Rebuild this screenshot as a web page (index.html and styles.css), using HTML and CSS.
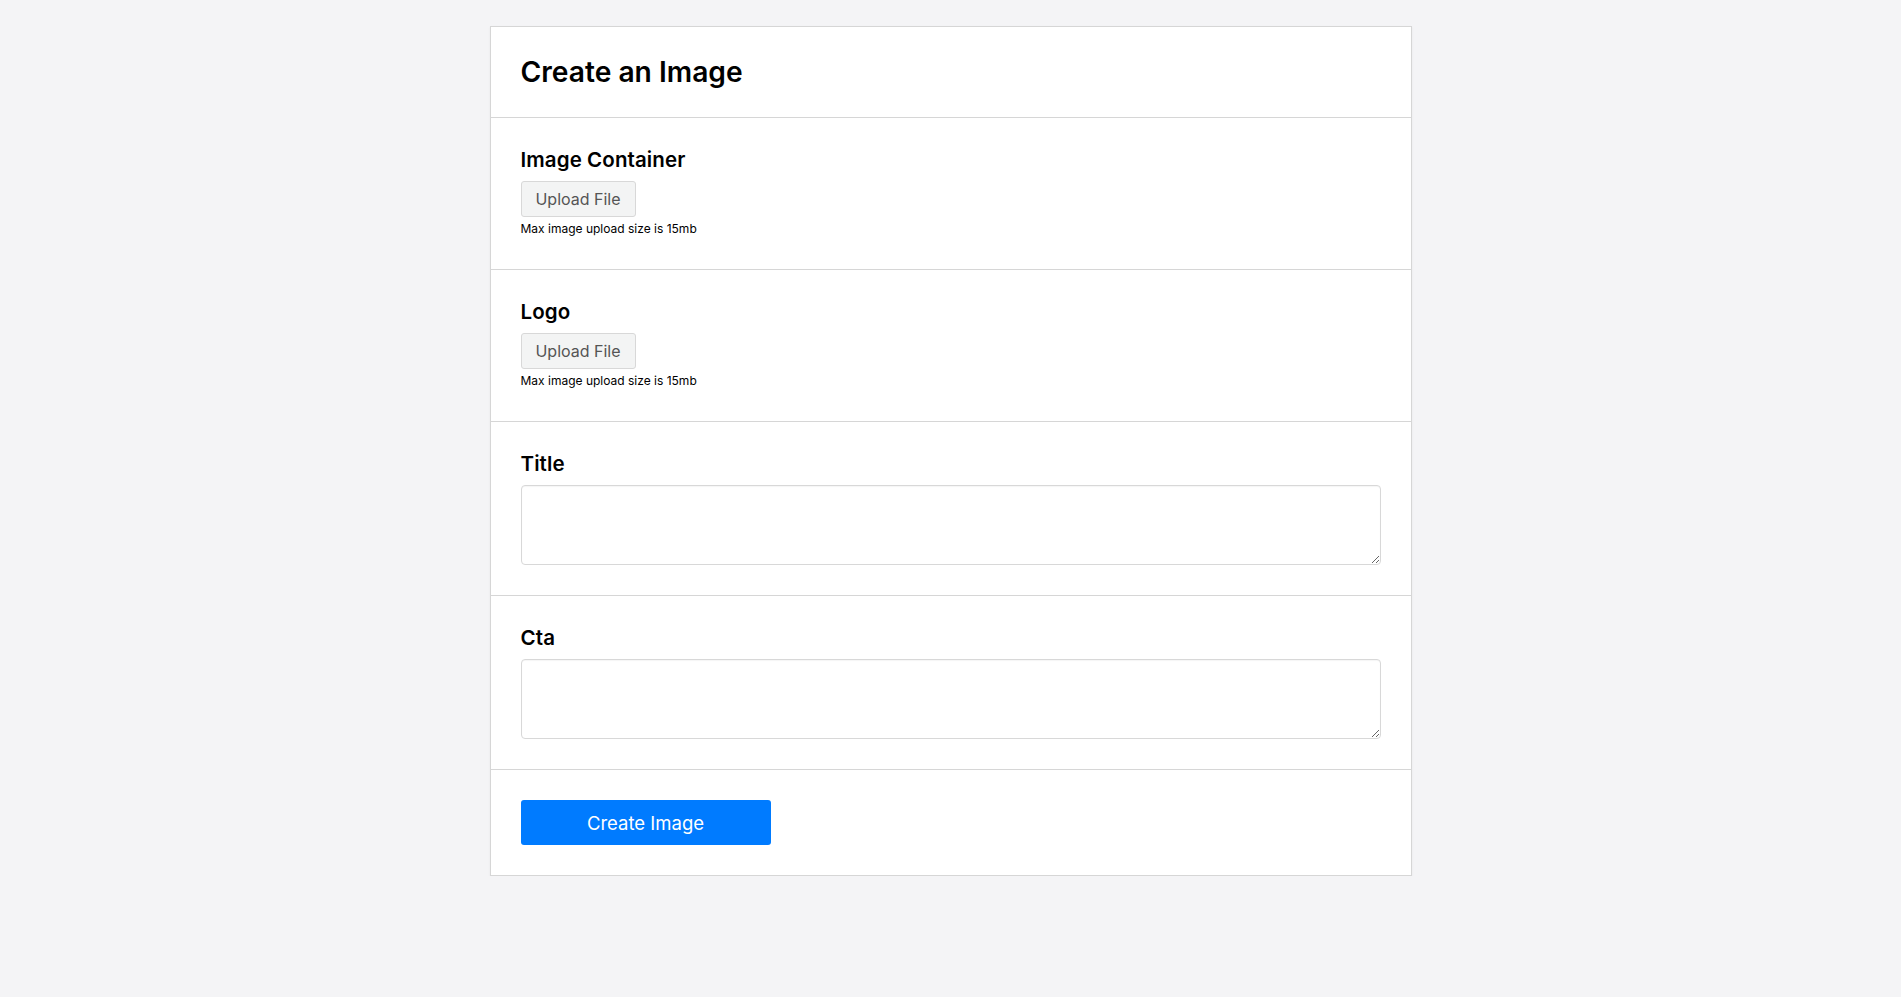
FILE: index.html
```html
<!DOCTYPE html>
<html lang="en">
<head>
<meta charset="utf-8">
<title>Create an Image</title>
<link rel="stylesheet" href="styles.css">
</head>
<body>
<main class="page">
  <form class="card">
    <header class="card-header">
      <h1 class="card-title">Create an Image</h1>
    </header>
    <section class="field">
      <label class="field-label">Image Container</label>
      <button type="button" class="upload-btn">Upload File</button>
      <p class="hint">Max image upload size is 15mb</p>
    </section>
    <section class="field">
      <label class="field-label">Logo</label>
      <button type="button" class="upload-btn">Upload File</button>
      <p class="hint">Max image upload size is 15mb</p>
    </section>
    <section class="field field-text">
      <label class="field-label">Title</label>
      <textarea class="text-input"></textarea>
    </section>
    <section class="field field-text">
      <label class="field-label">Cta</label>
      <textarea class="text-input"></textarea>
    </section>
    <section class="actions">
      <button type="button" class="primary-btn">Create Image</button>
    </section>
  </form>
</main>
</body>
</html>
```

FILE: styles.css
```css
* { box-sizing: border-box; }

html, body {
  margin: 0;
  padding: 0;
  background: #f4f4f6;
  font-family: Inter, "Noto Sans", "Liberation Sans", sans-serif;
  color: #000;
}

.page {
  display: flex;
  justify-content: center;
  padding-top: 26px;
}

.card {
  width: 922px;
  background: #fff;
  border: 1px solid #d6d6d6;
  box-shadow: 0 1px 2px rgba(0, 0, 0, 0.06);
  display: flex;
  flex-direction: column;
}

.card-header {
  padding: 24px 30px;
  border-bottom: 1px solid #d6d6d6;
}

.card-title {
  margin: 0;
  font-size: 28.2px;
  line-height: 42px;
  font-weight: 600;
  letter-spacing: 0;
}

.field {
  display: flex;
  flex-direction: column;
  align-items: flex-start;
  padding: 24px 30px 31px;
  border-bottom: 1px solid #d6d6d6;
}

.field-text {
  padding-bottom: 30px;
}

.field-label {
  font-size: 20.5px;
  line-height: 36px;
  font-weight: 600;
  letter-spacing: 0.1px;
}

.upload-btn {
  margin-top: 3px;
  width: 115px;
  height: 36px;
  padding: 0;
  background: #f3f4f4;
  border: 1px solid #d8d8d8;
  border-radius: 3px;
  font-family: inherit;
  font-size: 16px;
  color: #555;
}

.hint {
  margin: 3px 0 0;
  font-size: 12px;
  line-height: 18px;
  color: #000;
}

.text-input {
  margin-top: 3px;
  width: 100%;
  height: 80px;
  border: 1px solid #d8d8d8;
  border-radius: 4px;
  box-shadow: inset 0 1px 1px rgba(0, 0, 0, 0.04);
  font-family: inherit;
  font-size: 16px;
  padding: 8px 10px;
}

.actions {
  padding: 30px;
}

.primary-btn {
  width: 250px;
  height: 45px;
  background: #007bff;
  border: 0;
  border-radius: 3px;
  color: #fff;
  font-family: inherit;
  font-size: 18.5px;
  padding: 0;
}
```
